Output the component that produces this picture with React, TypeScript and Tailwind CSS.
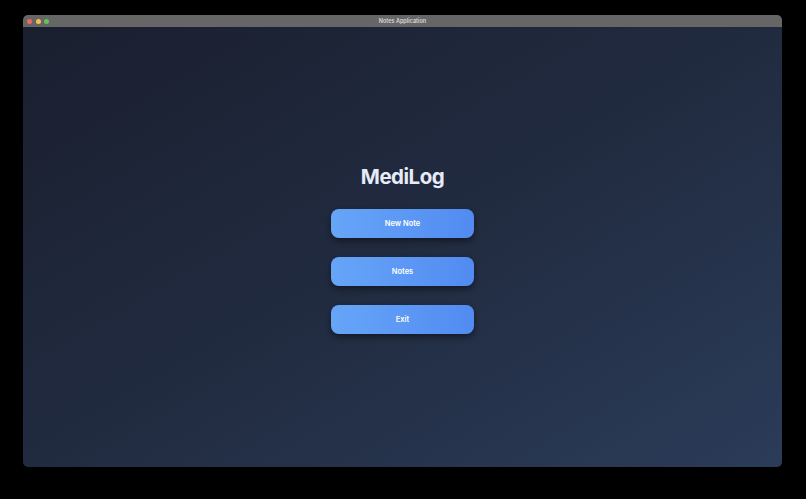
import React from 'react';

const MenuButton: React.FC<{ label: string }> = ({ label }) => (
  <button className="flex h-[29px] w-[143px] items-center justify-center rounded-[8px] bg-gradient-to-r from-[#67a5f8] to-[#528bf1] text-[7.5px] font-semibold text-white shadow-[0_3px_6px_rgba(0,0,0,0.45)]">
    {label}
  </button>
);

export default function App() {
  return (
    <div className="h-[499px] w-[806px] bg-black pl-[23px] pt-[15px] font-['Inter',sans-serif]">
      <div className="flex h-[452px] w-[759px] flex-col overflow-hidden rounded-[5px]">
        <div className="relative flex h-[12px] items-center justify-center bg-[#666666]">
          <div className="absolute left-[4px] top-[4px] flex gap-[3.5px]">
            <span className="h-[5px] w-[5px] rounded-full bg-[#ec6a5e]" />
            <span className="h-[5px] w-[5px] rounded-full bg-[#f4bf4f]" />
            <span className="h-[5px] w-[5px] rounded-full bg-[#61c554]" />
          </div>
          <span className="text-[5.5px] font-semibold text-[#d8d8d8]">Notes Application</span>
        </div>

        <div className="flex flex-1 flex-col items-center justify-center bg-gradient-to-br from-[#1a1f2f] via-[#212b40] to-[#2b3c59]">
          <h1 className="mb-[15px] text-[20.5px] font-bold leading-[34px] tracking-[-0.5px] text-[#e6ebf7]">MediLog</h1>
          <div className="flex flex-col gap-[19px]">
            <MenuButton label="New Note" />
            <MenuButton label="Notes" />
            <MenuButton label="Exit" />
          </div>
        </div>
      </div>
    </div>
  );
}
